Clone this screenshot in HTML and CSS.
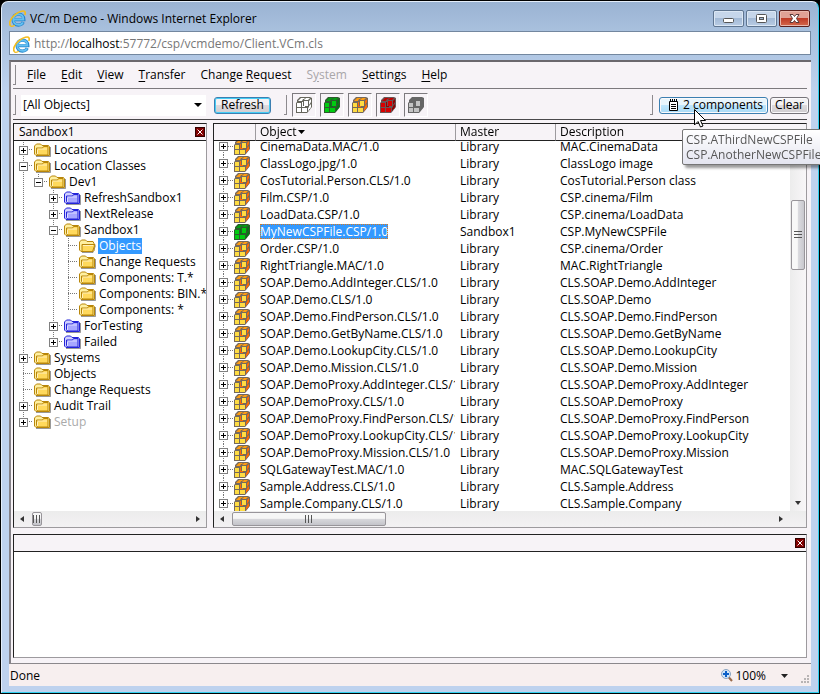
FILE: index.html
```html
<!DOCTYPE html>
<html lang="en">
<head>
    <meta charset="UTF-8">
    <meta name="viewport" content="width=device-width, initial-scale=1.0">
    <title>VC/m Demo</title>
    <link rel="stylesheet" href="styles.css">
</head>
<body>

    <!-- Shared icons -->
    <svg class="sprite" aria-hidden="true">
        <symbol id="ie" viewBox="0 0 16 16">
            <path d="M3.800 9.200h10.200C14 5.800 12 3.800 8.900 3.800 6 3.800 3.800 6 3.800 9s2.100 5.200 5.100 5.200c2.100 0 3.700-.9 4.500-2.700" fill="none" stroke="#2583c9" stroke-width="3"/>
            <path d="M4 9h9.500C13.500 5.800 11.700 4 8.900 4 6.200 4 4 6 4 9s2 5 4.900 5c2 0 3.400-.8 4.200-2.300" fill="none" stroke="#63c0f2" stroke-width="1.800"/>
            <path d="M1.700 15C-.8 13 1.500 7.600 6 4.100 10.100.9 14.200.2 15 1.700c.5.900.3 2-.2 3" fill="none" stroke="#f3bd20" stroke-width="1.600"/>
            <path d="M1.500 15c.9.800 2.500.3 4-.6" fill="none" stroke="#f3bd20" stroke-width="1.200"/>
        </symbol>
        <symbol id="folder" viewBox="0 0 17 14">
            <path d="M2 13.500h14.500V4" fill="none" stroke="#555" stroke-opacity=".6"/>
            <path d="M.5 11V3L2.500 1h4L8 2.500h6.500L15.500 4v8.500H2z" class="folder-back"/>
            <path d="M2.500 10.500V5h6l1-1.500H14V12H3.500z" class="folder-front"/>
            <path d="M3.500 6h9.500M3.500 7v4" class="folder-shine"/>
        </symbol>
        <symbol id="folder-open" viewBox="0 0 17 14">
            <path d="M3 13.500h11l2.500-7" fill="none" stroke="#555" stroke-opacity=".6"/>
            <path d="M.5 11V3L2.500 1h4L8 2.500h6L15 4.500v7L14 12.500H2z" class="folder-back"/>
            <path d="M3 5.500h13L13.500 12.500H3z" class="folder-front"/>
            <path d="M4 6.500h10" class="folder-shine"/>
        </symbol>
        <symbol id="cube" viewBox="0 0 16 16">
            <path d="M0 6L1 5V3l3-3h10l2 1v9l-4 5-1 1H0z" class="cube-edge"/>
            <path d="M2 4l2-2h3L6 4zM5 1h4L8 2H4zM10 1h4l-2 2H8z" class="cube-top"/>
            <path d="M12 11l1-1v3l-1 1zM13 4l2-2v3l-2 3zM13 9l2-2v3l-1 2h-1z" class="cube-side"/>
            <path d="M1 6h4v4H1zM1 11h4v4H1zM6 11h5v4H6zM8 4h4v5H8z" class="cube-front"/>
            <path d="M6 5h1v4h2v1H6z" class="cube-side"/>
        </symbol>
        <symbol id="close-x" viewBox="0 0 10 10">
            <path d="M2.500 2.500l5 5M7.500 2.500l-5 5" stroke="#fff" fill="none"/>
        </symbol>
        <symbol id="grip-lines" viewBox="0 0 8 8">
            <path d="M.500 0v8M3.500 0v8M6.500 0v8" stroke="#555" fill="none"/>
        </symbol>
    </svg>

    <div class="window">
        <header class="title-bar">
            <svg class="ie-icon"><use href="#ie"/></svg>
            <h1>VC/m Demo - Windows Internet Explorer</h1>
            <div class="window-buttons">
                <button aria-label="Minimize"><svg width="13" height="11"><rect x="1.500" y="5.500" width="10" height="4" rx="1" fill="#fff" stroke="#555"/></svg></button>
                <button aria-label="Maximize"><svg width="13" height="11"><rect x="1.500" y="1.500" width="10" height="8" rx="1" fill="#fff" stroke="#555"/><rect x="4.500" y="4.500" width="4" height="2" fill="#9fb6d0" stroke="#555"/></svg></button>
                <button class="close" aria-label="Close"><svg width="13" height="11"><path d="M2 1.500h3l1.500 2 1.500-2h3L8.500 5.500l2.500 4H8l-1.500-2-1.500 2H2l2.500-4z" fill="#fff" stroke="#5a3a3a"/></svg></button>
            </div>
        </header>

        <div class="address-bar">
            <svg class="ie-icon"><use href="#ie"/></svg>
            <span>http://<b>localhost</b>:57772/csp/vcmdemo/Client.VCm.cls</span>
        </div>

        <main class="page">
            <nav class="menu">
                <i class="grip"></i>
                <button><u>F</u>ile</button>
                <button><u>E</u>dit</button>
                <button><u>V</u>iew</button>
                <button><u>T</u>ransfer</button>
                <button>Change <u>R</u>equest</button>
                <button disabled>S<u>y</u>stem</button>
                <button><u>S</u>ettings</button>
                <button><u>H</u>elp</button>
            </nav>

            <div class="toolbar">
                <i class="grip"></i>
                <div class="filter">
                    <select aria-label="Filter">
                        <option>[All Objects]</option>
                    </select>
                    <svg width="8" height="4"><path d="M0 0h8L4 4z"/></svg>
                </div>
                <button class="btn focused">Refresh</button>
                <i class="grip"></i>
                <div class="cube-buttons">
                    <button aria-label="All"><svg class="cube white"><use href="#cube"/></svg></button>
                    <button aria-label="Mine"><svg class="cube green"><use href="#cube"/></svg></button>
                    <button aria-label="Library"><svg class="cube"><use href="#cube"/></svg></button>
                    <button aria-label="Locked"><svg class="cube red"><use href="#cube"/></svg></button>
                    <button aria-label="Inactive"><svg class="cube gray"><use href="#cube"/></svg></button>
                </div>
                <div class="clipboard">
                    <i class="grip"></i>
                    <div class="components">
                        <button class="btn hover" aria-describedby="components-tip">
                            <svg width="9" height="12"><path d="M.5 2.500h8v9h-8z" fill="#fff" stroke="#000"/><path d="M2 5.500h5M2 7.500h5M2 9.500h5M1.500 0v3M3.500 0v3M5.500 0v3M7.500 0v3" stroke="#000"/></svg>
                            2 components
                        </button>
                        <svg class="cursor" width="12" height="19"><path d="M.5.500v15.500l3.500-3.500 2.500 5.500 2.500-1-2.500-5.500h5z" fill="#fff" stroke="#000"/></svg>
                        <div class="tooltip" id="components-tip" role="tooltip">CSP.AThirdNewCSPFile<br>CSP.AnotherNewCSPFile</div>
                    </div>
                    <button class="btn">Clear</button>
                </div>
            </div>

            <div class="workspace">
                <section class="panel tree-panel">
                    <div class="panel-head">
                        <h2>Sandbox1</h2>
                        <button class="panel-close" aria-label="Close"><svg><use href="#close-x"/></svg></button>
                    </div>
                    <div class="tree" id="tree"></div>
                    <div class="scroll-x">
                        <svg class="arrow" viewBox="0 0 4 6"><path d="M4 0v6L0 3z"/></svg>
                        <div class="thumb small"><svg><use href="#grip-lines"/></svg></div>
                        <svg class="arrow end" viewBox="0 0 4 6"><path d="M0 0v6l4-3z"/></svg>
                    </div>
                </section>

                <section class="panel list-panel">
                    <div class="list" id="list">
                        <table>
                            <colgroup>
                                <col class="col-icon">
                                <col class="col-object">
                                <col class="col-master">
                                <col>
                            </colgroup>
                            <thead>
                                <tr>
                                    <th aria-label="Expand"></th>
                                    <th>Object<svg width="7" height="4"><path d="M0 0h7L3.500 4z"/></svg></th>
                                    <th>Master</th>
                                    <th>Description</th>
                                </tr>
                            </thead>
                            <tbody id="rows"></tbody>
                        </table>
                    </div>
                    <div class="side">
                        <div class="side-head"></div>
                        <div class="scroll-y">
                            <svg class="arrow-y" viewBox="0 0 6 4"><path d="M0 4h6L3 0z"/></svg>
                            <div class="thumb"><svg><use href="#grip-lines"/></svg></div>
                            <svg class="arrow-y end" viewBox="0 0 6 4"><path d="M0 0h6L3 4z"/></svg>
                        </div>
                    </div>
                    <div class="scroll-x">
                        <svg class="arrow" viewBox="0 0 4 6"><path d="M4 0v6L0 3z"/></svg>
                        <div class="thumb"><svg><use href="#grip-lines"/></svg></div>
                        <svg class="arrow end" viewBox="0 0 4 6"><path d="M0 0v6l4-3z"/></svg>
                    </div>
                </section>
            </div>

            <section class="panel output">
                <div class="panel-head">
                    <button class="panel-close" aria-label="Close"><svg><use href="#close-x"/></svg></button>
                </div>
            </section>
        </main>

        <footer class="status">
            <span>Done</span>
            <button class="zoom">
                <svg width="12" height="13"><path d="M7.500 8l3.500 4" stroke="#9a6a4a" stroke-width="2"/><circle cx="5" cy="5" r="4.500" fill="#cfe4f8" stroke="#8aa4c0"/><path d="M5 2v6M2 5h6" stroke="#0a5fc8" stroke-width="2"/></svg>
                100%
                <svg class="down" width="7" height="4"><path d="M0 0h7L3.500 4z" fill="#222"/></svg>
            </button>
            <svg class="resize" width="9" height="9"><path d="M7 1h2M4 4h2M7 4h2M1 7h2M4 7h2M7 7h2" stroke="#b8b4b4" stroke-width="2"/></svg>
        </footer>
    </div>

    <script>
        const tree = [
            { name: "Locations", closed: true },
            { name: "Location Classes", children: [
                { name: "Dev1", children: [
                    { name: "RefreshSandbox1", closed: true, color: "blue" },
                    { name: "NextRelease", closed: true, color: "blue" },
                    { name: "Sandbox1", children: [
                        { name: "Objects", selected: true },
                        { name: "Change Requests" },
                        { name: "Components: T.*" },
                        { name: "Components: BIN.*" },
                        { name: "Components: *" }
                    ] },
                    { name: "ForTesting", closed: true, color: "blue" },
                    { name: "Failed", closed: true, color: "blue" }
                ] }
            ] },
            { name: "Systems", closed: true },
            { name: "Objects" },
            { name: "Change Requests" },
            { name: "Audit Trail", closed: true },
            { name: "Setup", closed: true, color: "disabled" }
        ];

        // [object, master, description]
        const objects = [
            ["CinemaData.MAC/1.0", "Library", "MAC.CinemaData"],
            ["ClassLogo.jpg/1.0", "Library", "ClassLogo image"],
            ["CosTutorial.Person.CLS/1.0", "Library", "CosTutorial.Person class"],
            ["Film.CSP/1.0", "Library", "CSP.cinema/Film"],
            ["LoadData.CSP/1.0", "Library", "CSP.cinema/LoadData"],
            ["MyNewCSPFile.CSP/1.0", "Sandbox1", "CSP.MyNewCSPFile"],
            ["Order.CSP/1.0", "Library", "CSP.cinema/Order"],
            ["RightTriangle.MAC/1.0", "Library", "MAC.RightTriangle"],
            ["SOAP.Demo.AddInteger.CLS/1.0", "Library", "CLS.SOAP.Demo.AddInteger"],
            ["SOAP.Demo.CLS/1.0", "Library", "CLS.SOAP.Demo"],
            ["SOAP.Demo.FindPerson.CLS/1.0", "Library", "CLS.SOAP.Demo.FindPerson"],
            ["SOAP.Demo.GetByName.CLS/1.0", "Library", "CLS.SOAP.Demo.GetByName"],
            ["SOAP.Demo.LookupCity.CLS/1.0", "Library", "CLS.SOAP.Demo.LookupCity"],
            ["SOAP.Demo.Mission.CLS/1.0", "Library", "CLS.SOAP.Demo.Mission"],
            ["SOAP.DemoProxy.AddInteger.CLS/1.0", "Library", "CLS.SOAP.DemoProxy.AddInteger"],
            ["SOAP.DemoProxy.CLS/1.0", "Library", "CLS.SOAP.DemoProxy"],
            ["SOAP.DemoProxy.FindPerson.CLS/1.0", "Library", "CLS.SOAP.DemoProxy.FindPerson"],
            ["SOAP.DemoProxy.LookupCity.CLS/1.0", "Library", "CLS.SOAP.DemoProxy.LookupCity"],
            ["SOAP.DemoProxy.Mission.CLS/1.0", "Library", "CLS.SOAP.DemoProxy.Mission"],
            ["SQLGatewayTest.MAC/1.0", "Library", "MAC.SQLGatewayTest"],
            ["Sample.Address.CLS/1.0", "Library", "CLS.Sample.Address"],
            ["Sample.Company.CLS/1.0", "Library", "CLS.Sample.Company"]
        ];

        function renderTree(nodes) {
            return "<ul>" + nodes.map(node => {
                let toggle = "<i class='no-toggle'></i>";
                if (node.closed) toggle = "<button class='toggle plus' aria-label='Expand'></button>";
                if (node.children) toggle = "<button class='toggle' aria-label='Collapse'></button>";
                return `
                    <li>
                        <div class="node ${node.color || ""} ${node.selected ? "selected" : ""}">
                            ${toggle}
                            <svg class="folder"><use href="#${node.selected ? "folder-open" : "folder"}"/></svg>
                            <span>${node.name}</span>
                        </div>
                        ${node.children ? renderTree(node.children) : ""}
                    </li>
                `;
            }).join("") + "</ul>";
        }

        function renderRows() {
            return objects.map(([name, master, description]) => {
                let own = master !== "Library";
                return `
                    <tr class="${own ? "selected" : ""}">
                        <td><div class="expander"><button class="toggle plus" aria-label="Expand"></button><svg class="cube ${own ? "green" : ""}"><use href="#cube"/></svg></div></td>
                        <td><span>${name}</span></td>
                        <td>${master}</td>
                        <td>${description}</td>
                    </tr>
                `;
            }).join("");
        }

        document.getElementById("tree").innerHTML = renderTree(tree);
        document.getElementById("rows").innerHTML = renderRows();
        document.getElementById("list").scrollTop = 3;
    </script>

</body>
</html>
```
FILE: styles.css
```css
* {
    box-sizing: border-box;
}
body {
    margin: 0;
    height: 100vh;
    padding: 1px;
    overflow: hidden;
    background: #000;
    color: #000;
    font-family: "Open Sans", "Noto Sans", sans-serif;
    font-size: 12px;
    line-height: 16px;
}
button, select {
    margin: 0;
    padding: 0;
    border: none;
    background: none;
    color: inherit;
    font: inherit;
}
h1, h2 {
    margin: 0;
    font-size: 12px;
    font-weight: normal;
}
svg {
    flex: none;
}
.sprite {
    position: absolute;
    width: 0;
    height: 0;
}
.window {
    display: flex;
    flex-direction: column;
    height: 100%;
    padding: 0 7px 6px;
    border: 1px solid #e4eefa;
    border-right-color: #30d0f0;
    border-bottom-color: #30d0f0;
    border-radius: 7px 7px 0 0;
    background: linear-gradient(#9ab3d3, #a9c1de 30px, #bed2ee 90px);
}

/* Title and address */
.title-bar {
    display: flex;
    align-items: center;
    gap: 4px;
    height: 29px;
    padding-top: 4px;
}
.ie-icon {
    width: 17px;
    height: 17px;
}
.title-bar h1 {
    flex: 1;
}
.window-buttons {
    display: flex;
    gap: 2px;
    padding-right: 1px;
}
.window-buttons button {
    display: flex;
    align-items: center;
    justify-content: center;
    width: 31px;
    height: 17px;
    border: 1px solid #5f7590;
    border-radius: 2px;
    background: linear-gradient(#c6d6ea 50%, #a3bad6 50%, #b9cce4);
    box-shadow: inset 0 0 0 1px #dbe7f4;
}
.window-buttons .close {
    border-color: #5b1f1c;
    background: linear-gradient(#e0a195 45%, #bf3b26 50%, #d4684c);
    box-shadow: inset 0 0 0 1px #e9b8ad;
}
.address-bar {
    display: flex;
    align-items: center;
    gap: 4px;
    height: 24px;
    margin-bottom: 5px;
    padding: 2px 0 0 3px;
    border: 1px solid #73879f;
    background: #fff;
    color: #777;
}
.address-bar b {
    color: #000;
    font-weight: normal;
}

/* Page */
.page {
    display: flex;
    flex-direction: column;
    flex: 1;
    min-height: 0;
    padding: 0 4px 5px 2px;
    border-top: 2px solid #6b686d;
    border-left: 2px solid #858288;
    border-bottom: 1px solid #8b888c;
    background: #f7f3f7;
}
.grip {
    flex: none;
    width: 3px;
    height: 20px;
    border-right: 1px solid #8d8a8e;
    border-bottom: 1px solid #8d8a8e;
}
.menu {
    display: flex;
    align-items: center;
    gap: 15px;
    height: 27px;
    padding-bottom: 1px;
    border-bottom: 1px solid #7c797d;
}
.menu .grip {
    margin-right: -4px;
}
.menu button:disabled {
    color: #a9a6a9;
}
.menu u {
    text-underline-offset: 2px;
}
.toolbar {
    display: flex;
    align-items: center;
    height: 31px;
    margin-bottom: 3px;
    padding-top: 2px;
    border-bottom: 1px solid #4a484b;
}
.filter {
    display: grid;
    align-items: center;
    width: 185px;
    margin: 0 8px 0 5px;
    background: #fff;
}
.filter select {
    grid-area: 1 / 1;
    height: 21px;
    padding-left: 2px;
    appearance: none;
}
.filter svg {
    grid-area: 1 / 1;
    justify-self: end;
    margin-right: 4px;
    pointer-events: none;
}
.btn {
    display: flex;
    align-items: center;
    height: 17px;
    padding: 0 4px;
    border: 1px solid #77747a;
    border-radius: 3px;
    background: linear-gradient(#f4f2f4 45%, #dddadd 50%, #d0cdd0);
    box-shadow: inset 0 0 0 1px #fbf9fb;
}
.btn.focused {
    margin-right: 13px;
    padding: 0 6px;
    border-color: #3c7fb1;
    box-shadow: inset 0 0 0 1px #45cdf5;
}
.btn.hover {
    gap: 5px;
    padding: 0 4px 0 9px;
    border-color: #3c7fb1;
    background: linear-gradient(#e8f5fc 45%, #bee6fd 50%, #a9daf5);
}
.cube-buttons {
    display: flex;
    gap: 4px;
    margin-left: 5px;
}
.cube-buttons button {
    display: flex;
    align-items: center;
    justify-content: center;
    width: 24px;
    height: 24px;
    border: 1px solid #fff;
    border-top-color: #7d7a7e;
    border-left-color: #7d7a7e;
}
.clipboard {
    display: flex;
    align-items: center;
    gap: 2px;
    margin: 0 -2px 0 auto;
}
.clipboard .grip {
    margin-right: 4px;
}
.components {
    position: relative;
}
.cursor {
    position: absolute;
    z-index: 3;
    top: 12px;
    left: 35px;
}
.tooltip {
    position: absolute;
    z-index: 2;
    top: 32px;
    left: 23px;
    padding: 2px 3px;
    border: 1px solid #767676;
    border-radius: 2px;
    background: linear-gradient(#fff, #e4e5f0);
    box-shadow: 3px 3px 3px #0006;
    color: #575757;
    line-height: 15px;
    white-space: nowrap;
}

/* Icons */
.cube {
    width: 16px;
    height: 16px;
    --edge: #75695c;
    --front: #ffdc42;
    --top: #ff9c10;
    --side: #ff6a00;
}
.cube.green {
    --edge: #2d5a2d;
    --front: #00cc10;
    --top: #00a010;
    --side: #007a10;
}
.cube.red {
    --edge: #6a5555;
    --front: #d80000;
    --top: #c00000;
    --side: #900000;
}
.cube.white {
    --edge: #66665c;
    --front: #fff;
    --top: #fff;
    --side: #fff;
}
.cube.gray {
    --edge: #666;
    --front: #c4c4c4;
    --top: #666;
    --side: #666;
}
.cube-edge { fill: var(--edge); }
.cube-front { fill: var(--front); }
.cube-top { fill: var(--top); }
.cube-side { fill: var(--side); }
.folder {
    width: 17px;
    height: 14px;
    --line: #b8860b;
    --back: #fff0a0;
    --fill: #ffd95c;
}
.blue .folder {
    --line: #2424d8;
    --back: #d0d0ff;
    --fill: #a8a8ff;
}
.folder-back {
    fill: var(--back);
    stroke: var(--line);
}
.folder-front {
    fill: var(--fill);
    stroke: var(--line);
}
.folder-shine {
    fill: none;
    stroke: #fff;
    stroke-opacity: .6;
}
.toggle {
    flex: none;
    width: 9px;
    height: 9px;
    border: 1px solid #808080;
    background: linear-gradient(#000, #000) center / 5px 1px no-repeat #fff;
}
.toggle.plus {
    background:
        linear-gradient(#000, #000) center / 5px 1px no-repeat,
        linear-gradient(#000, #000) center / 1px 5px no-repeat #fff;
}

/* Panels */
.workspace {
    display: flex;
    flex: 1;
    gap: 6px;
    min-height: 0;
}
.panel {
    border: 1px solid #9d9a9e;
    border-top-color: #222;
    border-left-color: #222;
    background: #fff;
}
.panel-head {
    display: flex;
    align-items: center;
    height: 17px;
    padding: 0 1px 0 5px;
    border-bottom: 1px solid #222;
    background: #f7f3f7;
}
.panel-close {
    width: 10px;
    height: 10px;
    margin-left: auto;
    background: #800000;
    outline: 1px solid #300;
    outline-offset: -1px;
}
.panel-close svg {
    display: block;
    width: 10px;
    height: 10px;
}
.tree-panel {
    display: flex;
    flex: none;
    flex-direction: column;
    width: 194px;
}
.tree {
    flex: 1;
    min-height: 0;
    padding: 1px 0 0 5px;
    overflow: hidden;
}
.tree ul {
    margin: 0;
    padding: 0;
    list-style: none;
}
.tree ul ul {
    padding-left: 15px;
}
.tree li {
    background: repeating-linear-gradient(#777 0 1px, transparent 1px 2px) 4px 0 / 1px 100% no-repeat;
}
.tree li:last-child {
    background-size: 1px 8px;
}
.node {
    display: flex;
    align-items: center;
    height: 16px;
    white-space: nowrap;
    background: repeating-linear-gradient(90deg, #777 0 1px, transparent 1px 2px) 4px 7px / 10px 1px no-repeat;
}
.no-toggle {
    flex: none;
    width: 9px;
}
.node .folder {
    margin: 0 2px 0 6px;
}
.node span {
    padding: 0 1px;
}
.node.disabled {
    color: #aaa;
}
.node.selected span {
    background: #3399ff;
    color: #fff;
}
.list-panel {
    display: grid;
    flex: 1;
    grid-template-columns: 1fr 16px;
    grid-template-rows: 1fr 16px;
    min-width: 0;
}
.list {
    overflow: hidden;
}
.list table {
    width: 100%;
    border-spacing: 0;
    table-layout: fixed;
}
.col-icon { width: 41px; }
.col-object { width: 200px; }
.col-master { width: 100px; }
.list th {
    position: sticky;
    top: 0;
    height: 17px;
    padding: 0 0 0 4px;
    border-bottom: 1px solid #222;
    border-left: 1px solid #9d9a9e;
    background: #f7f3f7;
    font-weight: normal;
    line-height: 16px;
    text-align: left;
}
.list th:first-child {
    border-left: none;
}
.list th svg {
    margin-left: 2px;
    vertical-align: 2px;
}
.list td {
    height: 17px;
    padding: 0 0 0 5px;
    overflow: hidden;
    line-height: 16px;
    white-space: nowrap;
}
.list td:first-child {
    background: repeating-linear-gradient(#777 0 1px, transparent 1px 2px) 9px 0 / 1px 100% no-repeat;
}
.expander {
    display: flex;
    align-items: center;
    gap: 6px;
    height: 17px;
    background: repeating-linear-gradient(90deg, #777 0 1px, transparent 1px 2px) 9px 8px / 6px 1px no-repeat;
}
.list .selected span {
    display: inline-block;
    height: 15px;
    outline: 1px dotted #d87a20;
    outline-offset: -1px;
    background: #3399ff;
    color: #fff;
    line-height: 15px;
    vertical-align: top;
}
.side {
    display: flex;
    flex-direction: column;
}
.side-head {
    height: 17px;
    border-bottom: 1px solid #222;
    background: #f7f3f7;
}
.scroll-y {
    display: flex;
    flex: 1;
    flex-direction: column;
    align-items: center;
    padding: 6px 0;
    background: linear-gradient(90deg, #ececec, #f8f6f8);
}
.scroll-x {
    display: flex;
    align-items: center;
    height: 16px;
    padding: 0 6px 1px;
    background: linear-gradient(#ececec, #f3f1f3);
}
.list-panel .scroll-x {
    grid-column: 1 / -1;
    padding-right: 23px;
}
.arrow {
    width: 4px;
    height: 6px;
    fill: #333;
}
.arrow.end {
    margin-left: auto;
}
.arrow-y {
    width: 6px;
    height: 4px;
    fill: #333;
}
.arrow-y.end {
    margin-top: auto;
}
.thumb {
    display: flex;
    align-items: center;
    justify-content: center;
    border: 1px solid #98959a;
    border-radius: 2px;
}
.thumb svg {
    width: 8px;
    height: 8px;
}
.scroll-x .thumb {
    width: 154px;
    height: 14px;
    margin-left: 8px;
    background: linear-gradient(#f6f6f6 45%, #d8d8dc 50%, #c4c4ca);
}
.scroll-x .thumb.small {
    width: 10px;
}
.scroll-y .thumb {
    width: 14px;
    height: 70px;
    margin-top: 49px;
    background: linear-gradient(90deg, #f8f8f8 45%, #dcdce0 50%, #c8c8ce);
}
.scroll-y .thumb svg {
    transform: rotate(90deg);
}
.output {
    height: 124px;
    margin-top: 6px;
}

/* Status bar */
.status {
    display: flex;
    align-items: center;
    height: 22px;
    padding: 1px 2px 0 1px;
    background: #f7efef;
}
.zoom {
    display: flex;
    align-items: center;
    gap: 2px;
    margin-left: auto;
}
.zoom .down {
    margin-left: 13px;
}
.resize {
    align-self: flex-end;
    margin: 0 0 2px 12px;
}
```
